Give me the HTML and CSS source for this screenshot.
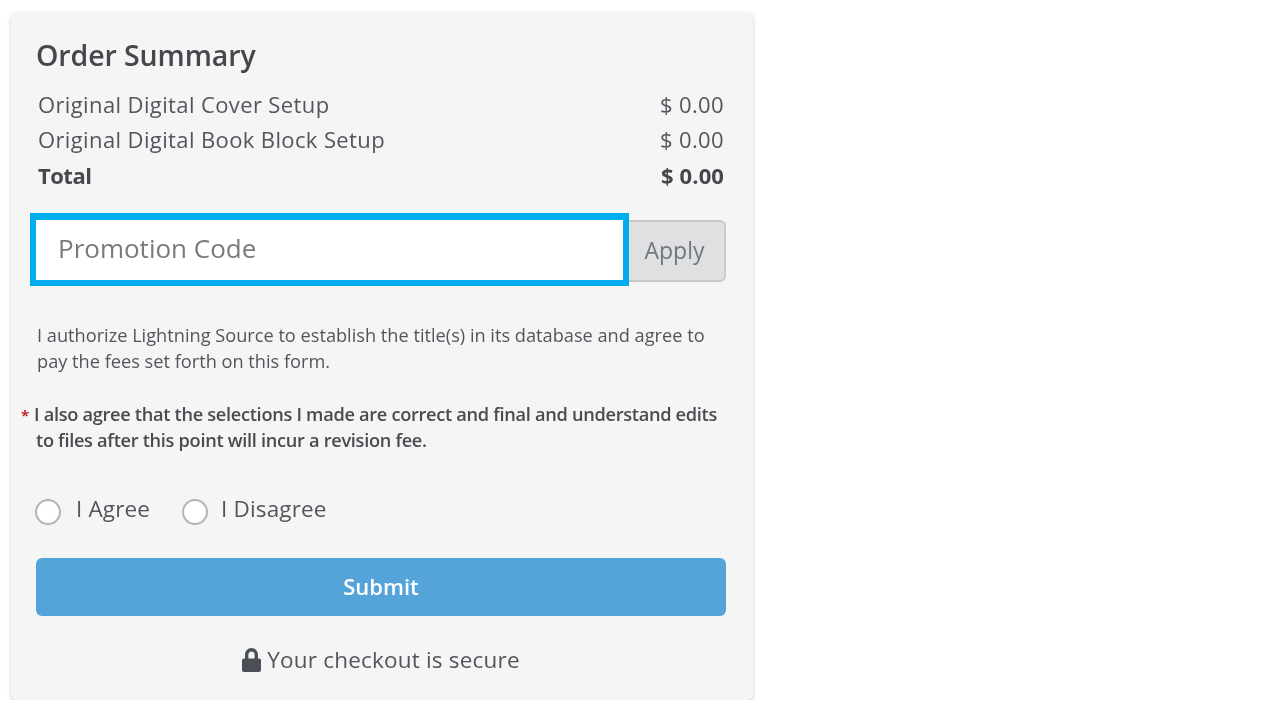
FILE: index.html
```html
<!DOCTYPE html>
<html lang="en">
<head>
<meta charset="utf-8">
<title>Order Summary</title>
<link rel="stylesheet" href="styles.css">
</head>
<body>
<section class="card">
  <h2 class="title">Order Summary</h2>
  <div class="rows">
    <div class="row"><span>Original Digital Cover Setup</span><span>$ 0.00</span></div>
    <div class="row"><span>Original Digital Book Block Setup</span><span>$ 0.00</span></div>
    <div class="row total"><span class="total-label">Total</span><span>$ 0.00</span></div>
  </div>
  <div class="promo">
    <div class="promo-input"><span class="soft">Promotion Code</span></div>
    <button class="apply" type="button"><span class="soft">Apply</span></button>
  </div>
  <p class="note">I authorize Lightning Source to establish the title(s) in its database and agree to pay the fees set forth on this form.</p>
  <p class="note strong"><span class="req">*</span>I also agree that the selections I made are correct and final and understand edits to files after this point will incur a revision fee.</p>
  <div class="choices">
    <label class="choice"><span class="radio"></span><span>I Agree</span></label>
    <label class="choice"><span class="radio"></span><span>I Disagree</span></label>
  </div>
  <button class="submit" type="button"><span class="soft">Submit</span></button>
  <div class="secure">
    <svg class="lock" viewBox="0 0 19 24" width="19" height="24" aria-hidden="true"><path d="M3 10.500V7C3 3 5.800 0 9.500 0S16 3 16 7v3.500h1c1.200 0 2 .8 2 2V22c0 1.200-.8 2-2 2H2c-1.200 0-2-.8-2-2v-9.500c0-1.200.8-2 2-2h1zm3.400 0h6.200V7c0-2.100-1.200-3.500-3.100-3.500S6.400 4.900 6.400 7v3.500z" fill-rule="evenodd"/></svg>
    <span>Your checkout is secure</span>
  </div>
</section>
</body>
</html>
```
FILE: styles.css
```css
* { box-sizing: border-box; }
html, body { margin: 0; background: #fff; }
body {
  padding: 12px 0 0 11px;
  font-family: "Open Sans", "Liberation Sans", sans-serif;
  color: #52565c;
}
.card {
  width: 742px;
  height: 688px;
  padding: 23px 27px 0 25px;
  background: #f5f5f5;
  border-radius: 6px;
  box-shadow: 0 2px 4px rgba(0, 0, 0, 0.2);
}
.title, .rows, .note, .choice > span:last-child, .secure, .soft {
  filter: blur(0.35px);
}
.title {
  margin: 0;
  font-size: 28.500px;
  line-height: 40px;
  font-weight: 600;
  color: #44474c;
  letter-spacing: -0.1px;
}
.rows { margin-top: 12px; padding: 0 2px; }
.row {
  display: flex;
  justify-content: space-between;
  height: 35px;
  font-size: 22px;
  line-height: 35px;
  letter-spacing: 0.38px;
}
.total {
  height: 36px;
  padding-top: 1px;
  font-weight: 700;
  color: #44474c;
  letter-spacing: 0.1px;
}
.total-label { letter-spacing: -0.5px; }
.promo {
  display: flex;
  align-items: flex-start;
  margin: 20px 0 0 -6px;
}
.promo-input {
  width: 599px;
  height: 73px;
  padding-left: 22px;
  background: #fff;
  border: solid #00aeef;
  border-width: 7px 6px 6px;
  font-size: 26px;
  line-height: 56px;
  color: #777b80;
}
.apply {
  width: 97px;
  height: 62px;
  margin-top: 7px;
  padding: 0 4px 3px 0;
  background: #dfe0e2;
  border: 2px solid #c8c9cb;
  border-left: 0;
  border-radius: 0 6px 6px 0;
  font-family: inherit;
  font-size: 23px;
  color: #73777c;
}
.note {
  margin: 0;
  padding-left: 1px;
  font-size: 18.200px;
  line-height: 26px;
  color: #52565c;
}
.promo + .note { margin-top: 36px; }
.strong {
  position: relative;
  margin-top: 27px;
  padding-left: 0;
  font-weight: 600;
  color: #484b50;
  letter-spacing: -0.3px;
  text-indent: -2px;
}
.req {
  position: absolute;
  left: -13px;
  top: 1px;
  color: #c0272d;
  font-size: 15px;
  font-weight: 700;
}
.choices {
  display: flex;
  gap: 32px;
  margin: 39px 0 0 -1px;
}
.choice {
  display: flex;
  gap: 15px;
  font-size: 22.500px;
  line-height: 34px;
  letter-spacing: 0.15px;
}
.choice + .choice { gap: 13px; }
.radio {
  width: 26px;
  height: 26px;
  margin-top: 7px;
  background: #fff;
  border: 2px solid #b4b4b4;
  border-radius: 50%;
}
.submit {
  display: block;
  width: 690px;
  height: 58px;
  margin-top: 32px;
  padding: 0 0 3px;
  border: 0;
  border-radius: 6px;
  background: #54a4d9;
  color: #fff;
  font-family: inherit;
  font-size: 22px;
  font-weight: 600;
}
.secure {
  display: flex;
  justify-content: center;
  align-items: center;
  gap: 6px;
  margin-top: 27px;
  font-size: 22.500px;
  line-height: 34px;
  letter-spacing: 0.2px;
}
.lock { fill: #4a4f57; flex: none; }
```
